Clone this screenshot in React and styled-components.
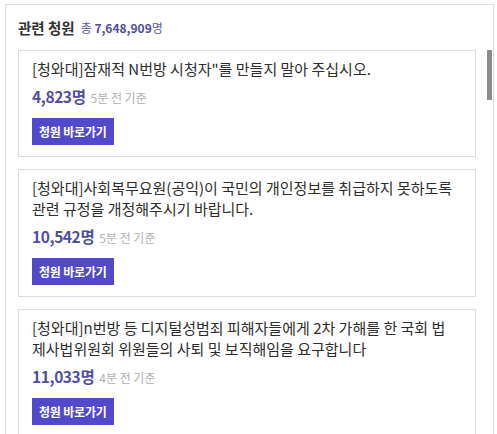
import React from 'react';
import styled, { createGlobalStyle } from 'styled-components';

const petitions = [
  {
    id: 1,
    title: '[청와대]잠재적 N번방 시청자"를 만들지 말아 주십시오.',
    count: '4,823',
    time: '5분 전 기준',
  },
  {
    id: 2,
    title:
      '[청와대]사회복무요원(공익)이 국민의 개인정보를 취급하지 못하도록 관련 규정을 개정해주시기 바랍니다.',
    count: '10,542',
    time: '5분 전 기준',
  },
  {
    id: 3,
    title:
      '[청와대]n번방 등 디지털성범죄 피해자들에게 2차 가해를 한 국회 법제사법위원회 위원들의 사퇴 및 보직해임을 요구합니다',
    count: '11,033',
    time: '4분 전 기준',
  },
];

export default function App() {
  return (
    <>
      <GlobalStyle />
      <Panel>
        <Header>
          <Title>관련 청원</Title>
          <Total>
            총 <strong>7,648,909</strong>명
          </Total>
        </Header>
        <ScrollArea>
          <List>
            {petitions.map((p) => (
              <Card key={p.id}>
                <CardTitle>{p.title}</CardTitle>
                <Meta>
                  <Count>{p.count}명</Count>
                  <Time>{p.time}</Time>
                </Meta>
                <GoButton type="button">청원 바로가기</GoButton>
              </Card>
            ))}
          </List>
          <ScrollThumb />
        </ScrollArea>
      </Panel>
    </>
  );
}

const GlobalStyle = createGlobalStyle`
  html, body {
    margin: 0;
    padding: 0;
    background: #fff;
    overflow: hidden;
  }
  body {
    font-family: 'Noto Sans CJK KR', 'Noto Sans', sans-serif;
    color: #333;
  }
`;

const Panel = styled.section`
  margin: 4px 0 0 5px;
  width: 489px;
  height: 600px;
  box-sizing: border-box;
  border: 1px solid #dcdcdc;
  border-bottom: none;
  padding-left: 12px;
  display: flex;
  flex-direction: column;
`;

const Header = styled.div`
  height: 45px;
  display: flex;
  align-items: center;
  gap: 6px;
  padding-bottom: 1px;
  box-sizing: border-box;
`;

const Title = styled.h2`
  margin: 0;
  font-size: 14.5px;
  font-weight: 700;
  color: #333;
`;

const Total = styled.span`
  font-size: 12px;
  color: #5a5aa6;
  padding-top: 1px;
  strong {
    font-weight: 700;
    color: #4e4e9c;
  }
`;

const ScrollArea = styled.div`
  position: relative;
  height: 384px;
`;

const List = styled.div`
  height: 100%;
  overflow: hidden;
  padding-right: 17px;
  display: flex;
  flex-direction: column;
  gap: 12px;
`;

const ScrollThumb = styled.div`
  position: absolute;
  top: 0;
  right: 1px;
  width: 5px;
  height: 50px;
  background: #8c8c8c;
`;

const Card = styled.article`
  flex-shrink: 0;
  border: 1px solid #dcdcdc;
  padding: 7px 18px 11px 13px;
  display: flex;
  flex-direction: column;
  align-items: flex-start;
`;

const CardTitle = styled.p`
  margin: 0;
  font-size: 15px;
  line-height: 21px;
  color: #2d2d2d;
`;

const Meta = styled.div`
  margin-top: 6px;
  display: flex;
  align-items: baseline;
  gap: 5px;
`;

const Count = styled.span`
  font-size: 15.5px;
  font-weight: 700;
  letter-spacing: -0.4px;
  color: #4f4f9f;
  line-height: 22px;
`;

const Time = styled.span`
  font-size: 12px;
  color: #b0b0b0;
`;

const GoButton = styled.button`
  margin-top: 11px;
  height: 27px;
  padding: 0 7px;
  border: none;
  background: #5149c9;
  color: #fff;
  font-family: inherit;
  font-size: 12px;
  letter-spacing: -0.2px;
  font-weight: 700;
  cursor: pointer;
`;
